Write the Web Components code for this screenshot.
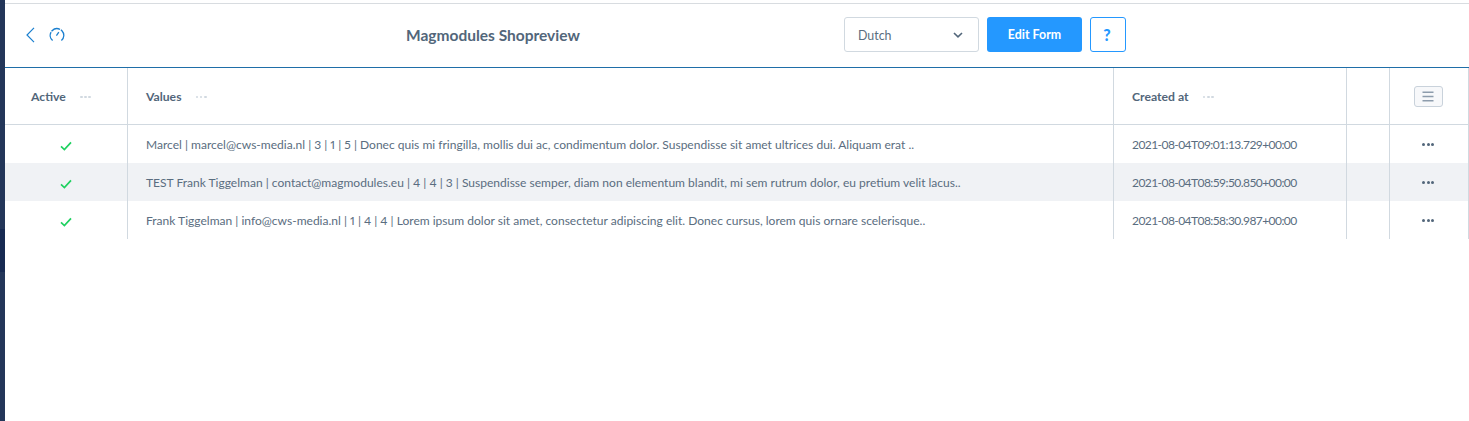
<!DOCTYPE html>
<html>
<head>
<meta charset="utf-8">
<title>Magmodules Shopreview</title>
<style>
  html, body { margin: 0; padding: 0; background: #fff; }
  body { font-family: Lato, "Noto Sans", sans-serif; color: #52667a; }
</style>
</head>
<body>
<template id="grid-row-tpl">
  <style>
    :host { display: grid; grid-template-columns: 123px 986px 233px 43px 1fr; height: 38px; font-size: 12.04px; font-variant-numeric: proportional-nums; color: #5a6d80; }
    :host([striped]) { background: #f0f2f5; }
    .cell { border-right: 1px solid #d1d9e0; display: flex; align-items: center; padding: 1px 0 0 18px; white-space: nowrap; overflow: hidden; }
    .cell.center { justify-content: center; padding: 0; }
    .check { margin-top: 3px; }
    .dots { display: flex; gap: 1.4px; margin-top: 1px; margin-left: -2px; }
    .dots i { width: 3px; height: 3px; border-radius: 50%; background: #52667a; }
    ::slotted([slot="created"]) { letter-spacing: -0.58px; font-variant-numeric: tabular-nums; }
  </style>
  <div class="cell center"><svg class="check" width="12" height="10" viewBox="0 0 12 10"><path d="M1 5.4 L4.4 8.6 L11 1.4" fill="none" stroke="#1fd160" stroke-width="1.7"/></svg></div>
  <div class="cell"><slot name="values"></slot></div>
  <div class="cell"><slot name="created"></slot></div>
  <div class="cell"></div>
  <div class="cell center"><span class="dots"><i></i><i></i><i></i></span></div>
</template>

<template id="grid-head-tpl">
  <style>
    :host { display: grid; grid-template-columns: 123px 986px 233px 43px 1fr; height: 56px; border-bottom: 1px solid #d1d9e0; font-size: 12.2px; font-weight: 700; color: #52667a; }
    .cell { border-right: 1px solid #d1d9e0; display: flex; align-items: center; padding: 1px 0 0 18px; white-space: nowrap; }
    .cell.first { padding-left: 26px; }
    .cell.last { justify-content: center; padding: 0 2px 0 0; }
    .more { display: flex; gap: 1.4px; margin: 1px 0 0 14px; }
    .more i { width: 2.8px; height: 2.8px; border-radius: 50%; background: #d1d9e0; }
    .menu { width: 29px; height: 21px; box-sizing: border-box; border: 1px solid #c9d2db; border-radius: 3px; background: #f7f8fa; display: flex; align-items: center; justify-content: center; }
    .menu svg { margin-top: 1px; }
  </style>
  <div class="cell first">Active<span class="more"><i></i><i></i><i></i></span></div>
  <div class="cell">Values<span class="more"><i></i><i></i><i></i></span></div>
  <div class="cell">Created at<span class="more"><i></i><i></i><i></i></span></div>
  <div class="cell"></div>
  <div class="cell last"><span class="menu"><svg width="12" height="11" viewBox="0 0 12 11"><path d="M0.5 1.2h11M0.5 5.5h11M0.5 9.8h11" stroke="#8d9cac" stroke-width="1.4"/></svg></span></div>
</template>

<template id="top-bar-tpl">
  <style>
    :host { display: flex; align-items: center; height: 61px; padding-bottom: 2px; border-top: 1px solid #d8dce0; border-bottom: 1px solid #1f6ea8; margin-top: 3px; }
    .icons { display: flex; align-items: center; gap: 14px; margin-left: 21px; width: 44px; }
    h1 { margin: 1px 0 0 336px; font-size: 15.5px; font-weight: 700; color: #52667a; width: 174px; white-space: nowrap; }
    .select { margin-left: 264px; width: 135px; height: 35px; box-sizing: border-box; border: 1px solid #d1d9e0; border-radius: 3px; display: flex; align-items: center; justify-content: space-between; padding: 1px 15px 0 13px; font-size: 12.4px; color: #5a6d80; }
    .select svg { margin-top: -1px; }
    .btn { margin-left: 8px; width: 95px; height: 35px; background: #2498ff; color: #fff; border-radius: 3px; display: flex; align-items: center; justify-content: center; font-size: 12.4px; font-weight: 700; }
    .help { margin-left: 8px; width: 36px; height: 35px; box-sizing: border-box; border: 1px solid #2498ff; border-radius: 3px; color: #2498ff; display: flex; align-items: center; justify-content: center; padding-right: 2px; font-size: 16px; font-weight: 900; }
  </style>
  <div class="icons">
    <svg width="9" height="16" viewBox="0 0 9 16"><path d="M8 0.8 L1 8 L8 15.2" fill="none" stroke="#1a7fcf" stroke-width="1.2"/></svg>
    <svg width="16" height="15" viewBox="0 0 16 15" fill="none" stroke="#1a7fcf" stroke-width="1.3"><path d="M3.6 13.6 A6.8 6.8 0 1 1 12.4 13.6" stroke-dasharray="9 1 9 1 30"/><path d="M7.4 8.6 L9.8 5.2"/></svg>
  </div>
  <h1><slot></slot></h1>
  <div class="select"><span>Dutch</span><svg width="10" height="6" viewBox="0 0 10 6"><path d="M1 1 L5 4.8 L9 1" fill="none" stroke="#52667a" stroke-width="1.6"/></svg></div>
  <div class="btn">Edit Form</div>
  <div class="help">?</div>
</template>

<template id="shop-page-tpl">
  <style>
    :host { display: flex; height: 421px; overflow: hidden; }
    .side { width: 5px; background: #233659; flex: none; display: flex; flex-direction: column; }
    .side i { display: block; height: 43px; margin-top: 229px; background: #172a52; }
    main { flex: 1; min-width: 0; }
  </style>
  <div class="side"><i></i></div>
  <main><slot></slot></main>
</template>

<shop-page>
  <top-bar>Magmodules Shopreview</top-bar>
  <grid-head></grid-head>
  <grid-row>
    <span slot="values">Marcel | marcel@cws-media.nl | 3 | 1 | 5 | Donec quis mi fringilla, mollis dui ac, condimentum dolor. Suspendisse sit amet ultrices dui. Aliquam erat ..</span>
    <span slot="created">2021-08-04T09:01:13.729+00:00</span>
  </grid-row>
  <grid-row striped>
    <span slot="values">TEST Frank Tiggelman | contact@magmodules.eu | 4 | 4 | 3 | Suspendisse semper, diam non elementum blandit, mi sem rutrum dolor, eu pretium velit lacus..</span>
    <span slot="created">2021-08-04T08:59:50.850+00:00</span>
  </grid-row>
  <grid-row>
    <span slot="values">Frank Tiggelman | info@cws-media.nl | 1 | 4 | 4 | Lorem ipsum dolor sit amet, consectetur adipiscing elit. Donec cursus, lorem quis ornare scelerisque..</span>
    <span slot="created">2021-08-04T08:58:30.987+00:00</span>
  </grid-row>
</shop-page>

<script>
  function fromTemplate(id) {
    return class extends HTMLElement {
      constructor() {
        super();
        this.attachShadow({ mode: "open" });
        this.shadowRoot.appendChild(document.getElementById(id).content.cloneNode(true));
      }
    };
  }
  customElements.define("shop-page", fromTemplate("shop-page-tpl"));
  customElements.define("top-bar", fromTemplate("top-bar-tpl"));
  customElements.define("grid-head", fromTemplate("grid-head-tpl"));
  customElements.define("grid-row", fromTemplate("grid-row-tpl"));
</script>
</body>
</html>
